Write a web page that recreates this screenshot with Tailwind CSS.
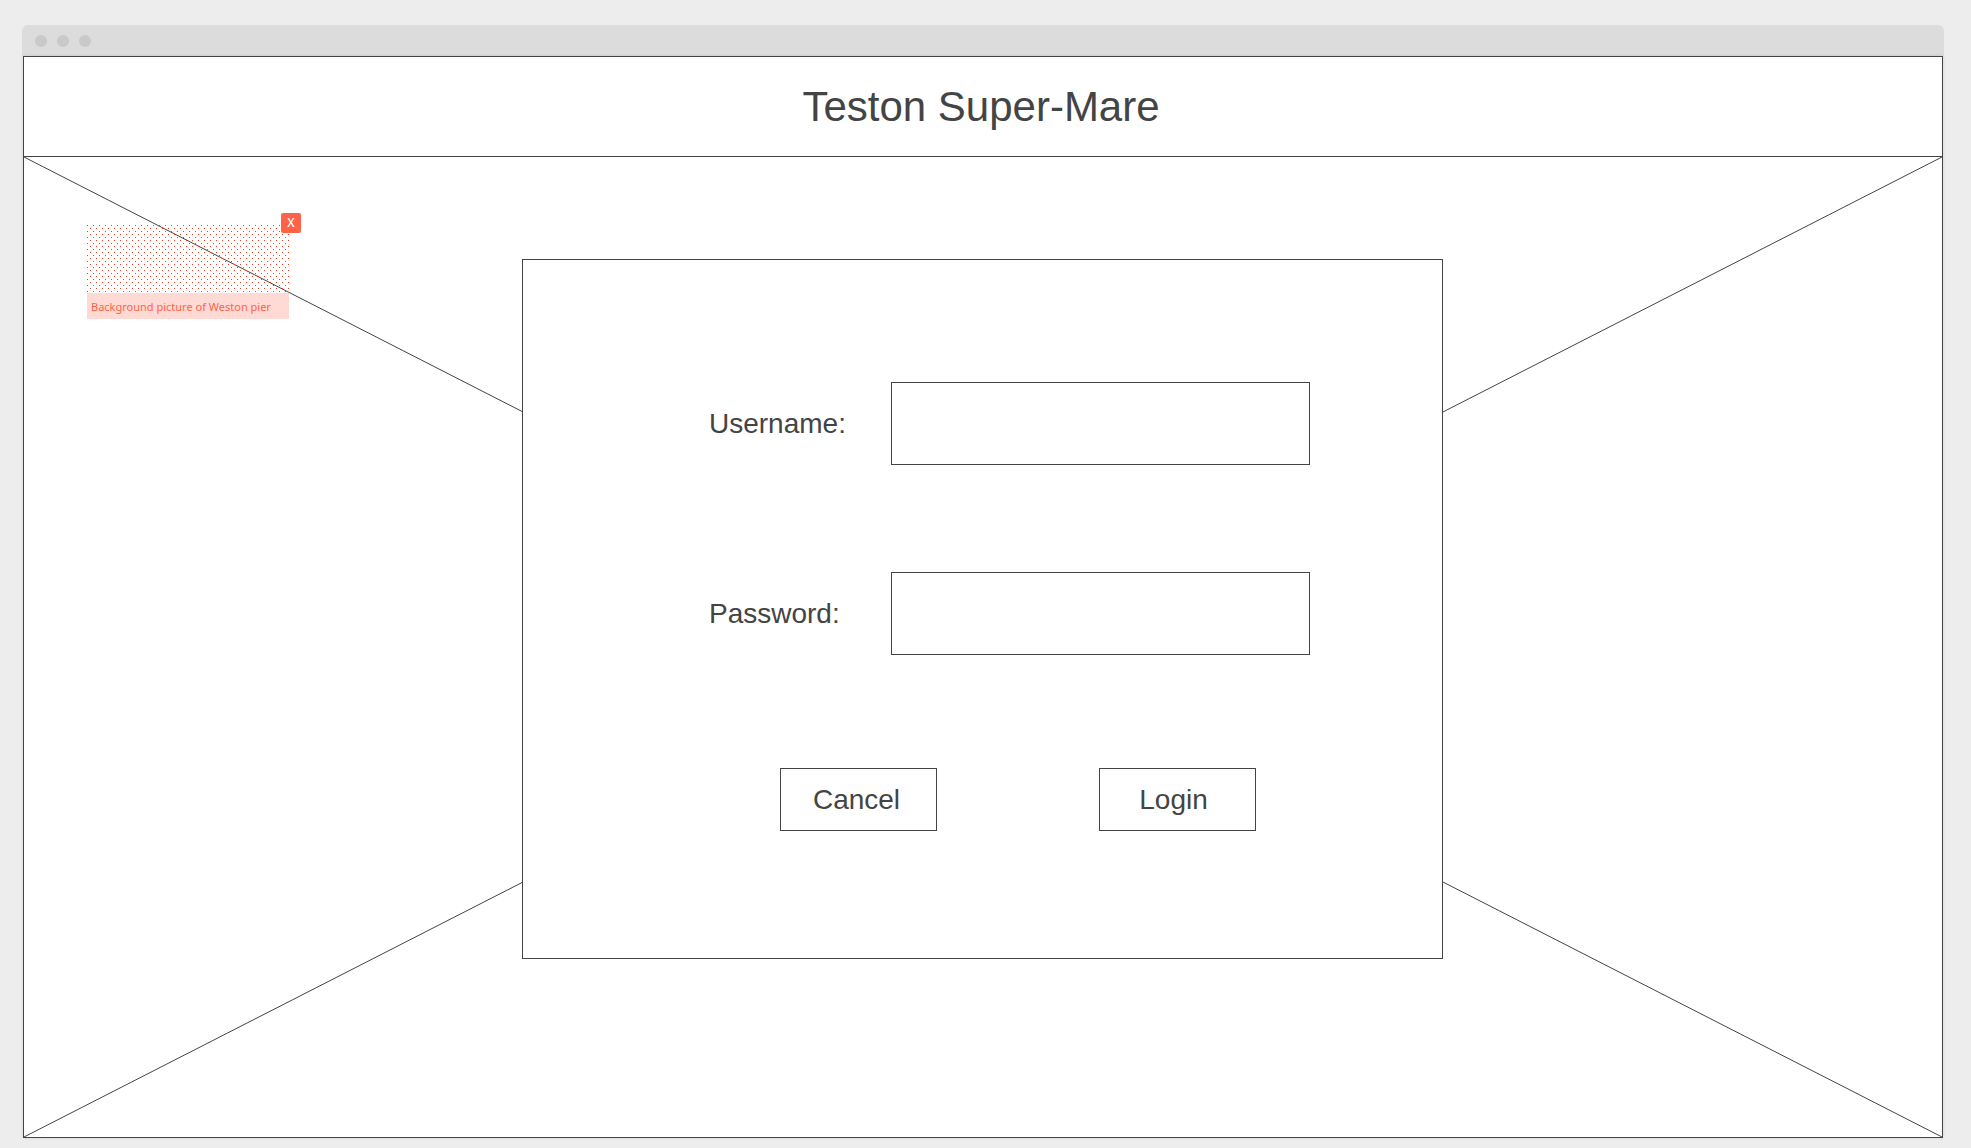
<!DOCTYPE html>
<html lang="en">
<head>
<meta charset="utf-8">
<meta name="viewport" content="width=device-width, initial-scale=1">
<title>Teston Super-Mare</title>
<script src="https://cdn.jsdelivr.net/npm/@tailwindcss/browser@4"></script>
</head>
<body class="flex min-h-screen flex-col bg-[#ededed] pt-[25px] pr-[27px] pb-[10px] pl-[22px] font-['Liberation_Sans',Arial,sans-serif] text-[#444]">
  <!-- Browser chrome -->
  <div class="flex h-[31px] items-center gap-[10px] rounded-t-md bg-[#dcdcdc] px-[13px]">
    <span class="size-3 rounded-full bg-[#c9c9c9]"></span>
    <span class="size-3 rounded-full bg-[#c9c9c9]"></span>
    <span class="size-3 rounded-full bg-[#c9c9c9]"></span>
  </div>

  <div class="mx-px flex grow flex-col border border-[#444] bg-white shadow-[0_0_3px_rgba(0,0,0,0.12)]">
    <header class="flex h-[100px] items-center justify-center border-b border-[#444] pr-1">
      <h1 class="text-[42px] leading-[48px]">Teston Super-Mare</h1>
    </header>

    <main class="relative flex grow flex-col items-center pt-[102px] pr-[17px] pb-16 pl-4">
      <!-- Image placeholder cross -->
      <svg class="absolute inset-0 size-full" viewBox="0 0 100 100" preserveAspectRatio="none" fill="none" stroke="#444" aria-hidden="true">
        <path d="M0 0L100 100M100 0L0 100" vector-effect="non-scaling-stroke"/>
      </svg>

      <!-- Designer's note -->
      <aside class="absolute top-[68px] left-[63px] w-[202px] font-['Noto_Sans','Open_Sans',sans-serif] text-[#ff6347]">
        <svg class="block h-[68px] w-full" aria-hidden="true">
          <defs>
            <pattern id="dots" width="6" height="6" patternUnits="userSpaceOnUse">
              <path d="M0 0h1v1h-1zM3 3h1v1h-1z" fill="#ee4023" shape-rendering="crispEdges"/>
            </pattern>
          </defs>
          <rect width="100%" height="100%" fill="url(#dots)"/>
        </svg>
        <p class="h-[26px] bg-[#ffdad5] px-1 text-[11px] leading-[28px] whitespace-nowrap">Background picture of Weston pier</p>
        <button type="button" aria-label="Close note" class="absolute -top-3 -right-3 flex size-5 items-center justify-center rounded-xs bg-[#ff6347] text-xs leading-5 font-medium text-white">X</button>
      </aside>

      <form class="relative w-full max-w-[921px] border border-[#444] bg-white pt-[122px] pr-[132px] pb-[127px] pl-[186px] text-[28px] leading-8">
        <div class="flex items-center">
          <label for="username" class="w-[182px] shrink-0">Username:</label>
          <input id="username" type="text" class="h-[83px] min-w-0 grow border border-[#444] bg-white px-4">
        </div>
        <div class="mt-[107px] flex items-center">
          <label for="password" class="w-[182px] shrink-0">Password:</label>
          <input id="password" type="password" class="h-[83px] min-w-0 grow border border-[#444] bg-white px-4">
        </div>
        <div class="mt-[113px] flex gap-[162px] pl-[71px]">
          <button type="button" class="h-[63px] w-[157px] border border-[#444] bg-white pr-1">Cancel</button>
          <button type="submit" class="h-[63px] w-[157px] border border-[#444] bg-white pr-2">Login</button>
        </div>
      </form>
    </main>
  </div>
</body>
</html>
